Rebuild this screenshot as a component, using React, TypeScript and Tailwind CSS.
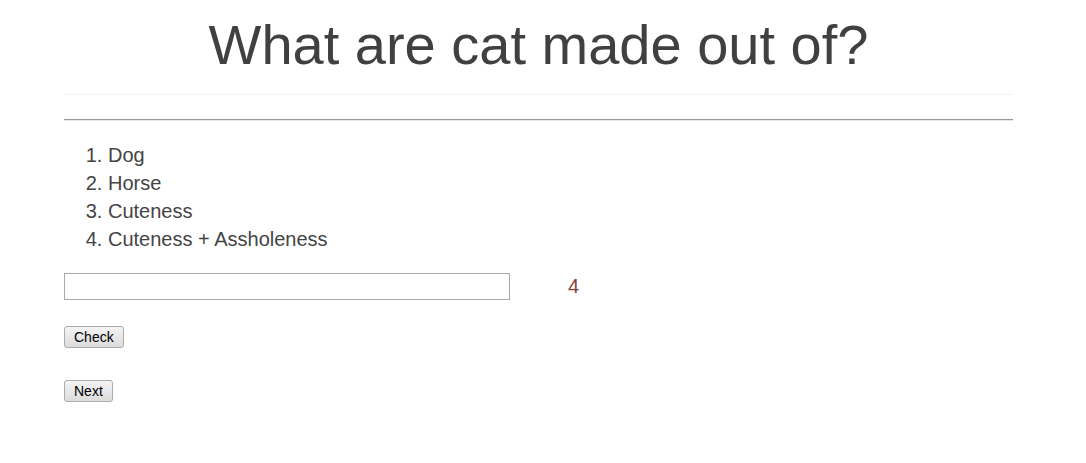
import React, { useState } from 'react';

const ANSWERS = ['Dog', 'Horse', 'Cuteness', 'Cuteness + Assholeness'];

const btn =
  'block h-[22px] px-[9px] border border-[#acacac] rounded-[3px] bg-gradient-to-b from-[#f4f4f4] to-[#dcdcdc] text-[14px] leading-[16px] text-black';

export default function App() {
  const [answer, setAnswer] = useState('');

  return (
    <div className="min-h-screen bg-white font-['Liberation_Sans',Arial,sans-serif]">
      <div className="ml-16 w-[949px]">
        {/* Question header */}
        <div className="pt-[13px] pb-[17px] border-b border-[#f3f3f3]">
          <h1 className="text-center text-[56px] leading-[64px] text-[#404040]">What are cat made out of?</h1>
        </div>

        <hr className="mt-[24px] border-0 border-t border-t-[#9a9a9a] border-b border-b-[#e6e6e6]" />

        {/* Options */}
        <ol className="mt-[20px] list-decimal pl-[44px] text-[20px] leading-[28px] text-[#444]">
          {ANSWERS.map((a, i) => (
            <li key={i}>{a}</li>
          ))}
        </ol>

        <div className="mt-[19px] flex items-center gap-[58px]">
          <input
            value={answer}
            onChange={(e) => setAnswer(e.target.value)}
            className="w-[446px] h-[27px] border border-[#a9a9a9] px-1 text-[14px] outline-none"
          />
          <span className="text-[20px] leading-[28px] text-[#84403f]">4</span>
        </div>

        <button className={`mt-[26px] ${btn}`}>Check</button>
        <button className={`mt-[32px] ${btn}`}>Next</button>
      </div>
    </div>
  );
}
